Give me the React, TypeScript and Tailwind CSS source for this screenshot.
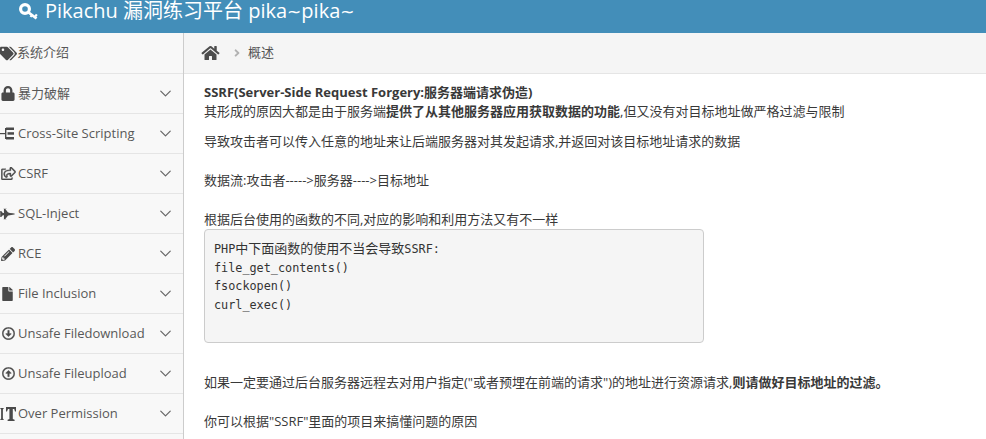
import { FaAngleRight, FaFighterJet, FaFile, FaHome, FaLock, FaPencilAlt, FaRegArrowAltCircleDown, FaRegArrowAltCircleUp, FaRegShareSquare, FaTags } from "react-icons/fa";
import { ChevronDown } from "lucide-react";
import type { ReactNode } from "react";

const font = "font-['Open_Sans','Noto_Sans_CJK_SC',sans-serif]";

function KeyIcon() {
  return (
    <svg viewBox="0 0 19 17" className="w-[19px] h-[17px] mt-[3px] mr-[7px] shrink-0" fill="none" stroke="currentColor">
      <circle cx="6" cy="6" r="4.4" strokeWidth="3.2" />
      <path d="M9 9 L17.5 15.5" strokeWidth="2.8" />
      <path d="M13.2 11.5 L11.6 14 M16.2 13.6 L17.8 11.4" strokeWidth="2.2" />
    </svg>
  );
}

function TreeIcon() {
  return (
    <svg viewBox="0 0 15 13" className="w-[15px] h-[13px]" fill="currentColor">
      <rect x="0" y="6" width="5" height="1.2" />
      <rect x="5" y="1" width="1.4" height="11" />
      <rect x="6" y="0.5" width="8" height="2.5" />
      <rect x="7.5" y="5.2" width="6.5" height="2.5" />
      <rect x="6" y="10" width="8" height="2.5" />
    </svg>
  );
}

function TextHeightIcon() {
  return (
    <svg viewBox="0 0 16 14" className="w-[16px] h-[14px]" fill="currentColor">
      <path d="M6 0 H16 V4.5 H15 L14.2 2 H12.8 V12 L14.6 12.8 V14 H7.6 V12.8 L9.4 12 V2 H8 L7 4.5 H6 Z" />
      <path d="M0 1 H4 L2.9 2.4 V11.6 L4 13 H0 L1.1 11.6 V2.4 Z" />
    </svg>
  );
}

const menu: { label: string; icon: ReactNode; first?: boolean }[] = [
  { label: "系统介绍", icon: <FaTags className="w-[17px] h-[15px]" />, first: true },
  { label: "暴力破解", icon: <FaLock className="w-[14px] h-[15px] ml-[1px]" /> },
  { label: "Cross-Site Scripting", icon: <TreeIcon /> },
  { label: "CSRF", icon: <FaRegShareSquare stroke="currentColor" strokeWidth={12} className="w-[15px] h-[13px] ml-[1px]" /> },
  { label: "SQL-Inject", icon: <FaFighterJet className="w-[15px] h-[12px]" /> },
  { label: "RCE", icon: <FaPencilAlt className="w-[14px] h-[14px] ml-[1px]" /> },
  { label: "File Inclusion", icon: <FaFile className="w-[11px] h-[14px] ml-[2px]" /> },
  { label: "Unsafe Filedownload", icon: <FaRegArrowAltCircleDown stroke="currentColor" strokeWidth={12} className="w-[13px] h-[13px] ml-[2px]" /> },
  { label: "Unsafe Fileupload", icon: <FaRegArrowAltCircleUp stroke="currentColor" strokeWidth={12} className="w-[13px] h-[13px] ml-[2px]" /> },
  { label: "Over Permission", icon: <TextHeightIcon /> },
];

function MenuItem({ label, icon, first }: { label: string; icon: ReactNode; first?: boolean }) {
  return (
    <div className={`${first ? "h-[41px]" : "h-[40px]"} shrink-0 flex items-center border-b border-[#e5e5e5] bg-[#f8f8f8] text-[13px] text-[#585858]`}>
      <span className={`${first ? "w-[17px]" : "w-[18px]"} shrink-0 flex justify-start text-[#4a4a4a]`}>{icon}</span>
      <span className="flex-1 whitespace-nowrap">{label}</span>
      {!first && <ChevronDown strokeWidth={1.5} className="w-[19px] h-[19px] mr-[8px] -mt-[1px] text-[#666]" />}
    </div>
  );
}

function Tilde() {
  return <span className="font-['DejaVu_Sans'] text-[17px]">~</span>;
}

export default function App() {
  return (
    <div className={`${font} h-screen w-full overflow-hidden flex flex-col bg-white`}>
      {/* Top bar */}
      <header className="h-[33px] shrink-0 bg-[#438eb9] overflow-hidden flex items-start pl-[19px] text-white">
        <KeyIcon />
        <span className="text-[20px] leading-[22px] whitespace-nowrap">
          Pikachu 漏洞练习平台 pika<Tilde />pika<Tilde />
        </span>
      </header>

      <div className="flex-1 flex min-h-0">
        {/* Sidebar */}
        <aside className="w-[184px] shrink-0 flex flex-col overflow-hidden bg-[#f8f8f8] border-r border-[#cccccc]">
          {menu.map((m) => (
            <MenuItem key={m.label} {...m} />
          ))}
        </aside>

        {/* Main */}
        <main className="flex-1 min-w-0 overflow-hidden">
          <div className="h-[41px] flex items-center bg-[#f5f5f5] border-b border-[#e5e5e5] pl-[17px] text-[13px] text-[#555]">
            <FaHome className="w-[19px] h-[16px] text-[#4c4c4c]" />
            <FaAngleRight className="w-[10px] h-[12px] ml-[12px] mr-[6px] text-[#b2b2b2]" />
            <span>概述</span>
          </div>

          <div className="pl-[20px] text-[13px] leading-[18px] text-[#393939]">
            <p className="pt-[9px] font-bold">SSRF(Server-Side Request Forgery:服务器端请求伪造)</p>
            <p className="mt-[1px] whitespace-nowrap">
              其形成的原因大都是由于服务端<b>提供了从其他服务器应用获取数据的功能</b>,但又没有对目标地址做严格过滤与限制
            </p>
            <p className="mt-[12px]">导致攻击者可以传入任意的地址来让后端服务器对其发起请求,并返回对该目标地址请求的数据</p>
            <p className="mt-[21px]">数据流:攻击者-----&gt;服务器----&gt;目标地址</p>
            <p className="mt-[21px]">根据后台使用的函数的不同,对应的影响和利用方法又有不一样</p>
            <pre className="w-[500px] h-[114px] mt-[1px] rounded-[4px] border border-[#cccccc] bg-[#f5f5f5] pt-[10px] pl-[9px] font-['DejaVu_Sans_Mono','Noto_Sans_CJK_SC',monospace] text-[11.8px] leading-[18.5px] text-[#333]">
              {"PHP"}
              <span className="text-[13px]">中下面函数的使用不当会导致</span>
              {"SSRF:\nfile_get_contents()\nfsockopen()\ncurl_exec()"}
            </pre>
            <p className="mt-[30px] whitespace-nowrap">
              如果一定要通过后台服务器远程去对用户指定("或者预埋在前端的请求")的地址进行资源请求,<b>则请做好目标地址的过滤。</b>
            </p>
            <p className="mt-[21px]">你可以根据"SSRF"里面的项目来搞懂问题的原因</p>
          </div>
        </main>
      </div>
    </div>
  );
}
